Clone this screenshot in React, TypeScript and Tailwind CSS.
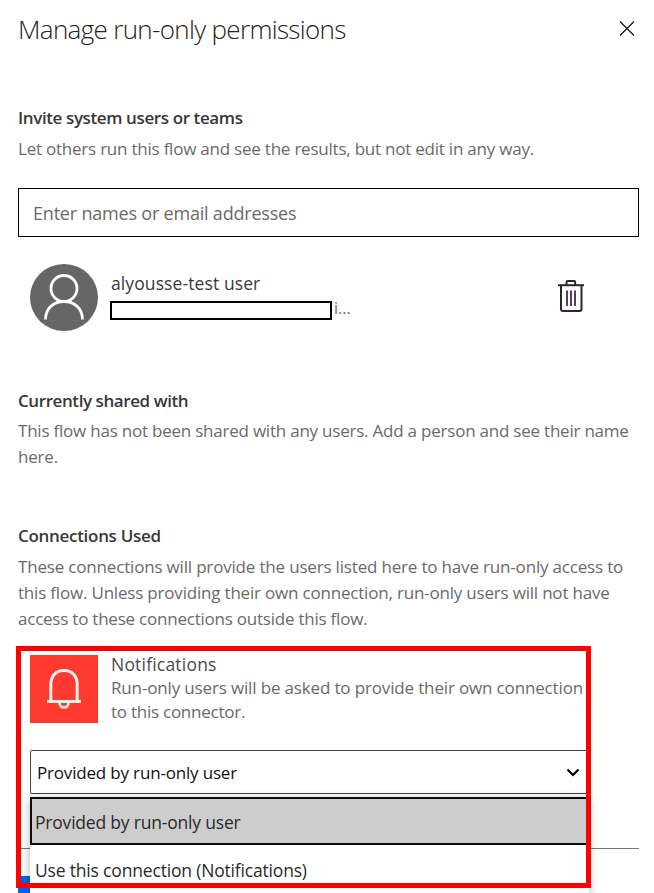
import React from "react";

type LineProps = { className: string; children: React.ReactNode };

function Line({ className, children }: LineProps) {
  return (
    <div className="flex">
      <span className={`block whitespace-nowrap ${className}`}>{children}</span>
    </div>
  );
}

function CloseIcon() {
  return (
    <svg width="16" height="16" viewBox="0 0 16 16" fill="none" stroke="#111" strokeWidth="1.2">
      <path d="M1 0.500L15 14.500M15 0.500L1 14.500" />
    </svg>
  );
}

function PersonIcon() {
  return (
    <svg width="68" height="67" viewBox="0 0 68 67" fill="none" stroke="#fff" strokeWidth="2.8">
      <circle cx="34" cy="24.5" r="13" />
      <path d="M15.5 55.5C15.5 44.500 23.500 37.500 34 37.500S52.500 44.500 52.500 55.500" />
    </svg>
  );
}

function TrashIcon() {
  return (
    <svg width="28" height="34" viewBox="0 0 28 34" fill="none" stroke="#2d2530" strokeWidth="2">
      <path d="M1 6.200H27" />
      <path d="M9.500 6V3.200Q9.500 2 10.700 2H17Q18.200 2 18.200 3.200V6" />
      <path d="M4 6V30Q4 32 6 32H22.500Q24.500 32 24.500 30V6" />
      <path d="M10 11.500V27M14 11.500V27M18 11.500V27" stroke="#452d48" strokeWidth="1.800" />
    </svg>
  );
}

function BellIcon() {
  return (
    <svg width="68" height="68" viewBox="0 0 68 68" fill="none" stroke="#fff0ed" strokeWidth="3">
      <path d="M17 46.500H51" />
      <path d="M20.800 46.500V29.500C20.800 20.500 26.500 15.500 34 15.500S47.200 20.500 47.200 29.500V46.500" />
      <path d="M29.500 47.500C29.500 54.200 38.500 54.200 38.500 47.500" strokeWidth="2.600" />
    </svg>
  );
}

export default function App() {
  return (
    <div className="relative h-[893px] w-[654px] overflow-hidden bg-white font-['Open_Sans','Noto_Sans',sans-serif] text-[17px] text-[#6a6a6a]">
      <header className="flex h-[58px] items-center justify-between pl-[18px] pr-[19px]">
        <Line className="text-[26px] font-light leading-[58px] tracking-[-0.67px] text-[#222]">Manage run-only permissions</Line>
        <CloseIcon />
      </header>

      <section className="px-[18px] pt-[46px]">
        <Line className="font-semibold leading-[28px] tracking-[-0.39px] text-[#383838]">Invite system users or teams</Line>
        <Line className="mt-[3px] leading-[28px] tracking-[-0.225px]">Let others run this flow and see the results, but not edit in any way.</Line>
      </section>

      <div className="ml-[18px] mt-[25px] flex h-[49px] w-[621px] items-center border border-black pl-[14px]">
        <Line className="text-[18px] leading-[28px] tracking-[-0.2px]">Enter names or email addresses</Line>
      </div>

      <section className="ml-[30px] mt-[27px] flex h-[68px] w-[556px]">
        <div className="h-[67px] w-[68px] rounded-[50%] bg-[#666]">
          <PersonIcon />
        </div>
        <div className="ml-[12px] flex-1 pt-[5px]">
          <Line className="pl-px text-[17.5px] leading-[28px] tracking-[0.1px] text-[#3a3a3a]">alyousse-test user</Line>
          <div className="mt-[4px] flex h-[19px] items-center">
            <div className="h-[19px] w-[222px] border-2 border-black bg-white" />
            <span className="ml-[2px] text-[16px] leading-[19px] -mt-[4px]">i...</span>
          </div>
        </div>
        <div className="pt-[15px] w-[29px]">
          <TrashIcon />
        </div>
      </section>

      <section className="px-[18px] pt-[55px]">
        <Line className="font-semibold leading-[28px] tracking-[-0.42px] text-[#383838]">Currently shared with</Line>
        <Line className="mt-[3px] leading-[26px] tracking-[-0.222px]">This flow has not been shared with any users. Add a person and see their name</Line>
        <Line className="leading-[26px] tracking-[-0.2px]">here.</Line>
      </section>

      <section className="px-[18px] pt-[52px]">
        <Line className="font-semibold leading-[28px] tracking-[-0.3px] text-[#383838]">Connections Used</Line>
        <Line className="mt-[4px] leading-[26px] tracking-[-0.18px]">These connections will provide the users listed here to have run-only access to</Line>
        <Line className="leading-[26px] tracking-[-0.195px]">this flow. Unless providing their own connection, run-only users will not have</Line>
        <Line className="leading-[26px] tracking-[-0.226px]">access to these connections outside this flow.</Line>
      </section>

      <section className="ml-[30px] mt-[23px] flex h-[68px]">
        <div className="h-[68px] w-[68px] bg-[#ff3b30]">
          <BellIcon />
        </div>
        <div className="ml-[13px] -mt-[2px]">
          <Line className="text-[17.5px] leading-[23px] tracking-[0.2px] text-[#4a4a4a]">Notifications</Line>
          <Line className="leading-[24px] tracking-[-0.153px]">Run-only users will be asked to provide their own connection</Line>
          <Line className="leading-[23px] tracking-[-0.25px]">to this connector.</Line>
        </div>
      </section>

      <div className="ml-[30px] mt-[27px] flex h-[44px] w-[560px] items-center justify-between rounded-[2px] border border-[#444] pl-[6px] pr-[9px]">
        <Line className="pt-[2px] leading-[28px] tracking-[-0.18px] text-[#111]">Provided by run-only user</Line>
        <svg width="14" height="9" viewBox="0 0 14 9" fill="none" stroke="#000" strokeWidth="2.200">
          <path d="M1.500 1.500L7 7L12.500 1.500" />
        </svg>
      </div>

      <div className="ml-[18px] mt-[54px] w-[621px] border-t border-[#777] pt-[27px]">
        <div className="h-[40px] w-[120px] bg-[#0062ff]" />
      </div>

      <div className="absolute left-[30px] top-[797px] h-[110px] w-[559px] bg-white shadow-[0_2px_10px_rgba(0,0,0,0.28)]">
        <div className="flex h-[48px] items-center border-2 border-[#0c0c0c] bg-[#cdcdcd] pl-[3px]">
          <Line className="pt-px text-[17.5px] leading-[28px] tracking-[-0.2px] text-[#2a2a2a]">Provided by run-only user</Line>
        </div>
        <div className="flex h-[50px] items-center pl-[5px]">
          <Line className="text-[17.5px] leading-[28px] tracking-[-0.18px] text-[#2a2a2a]">Use this connection (Notifications)</Line>
        </div>
      </div>

      <div className="absolute left-[16px] top-[646px] h-[242px] w-[575px] border-[5px] border-[#ff0000]" />
    </div>
  );
}
